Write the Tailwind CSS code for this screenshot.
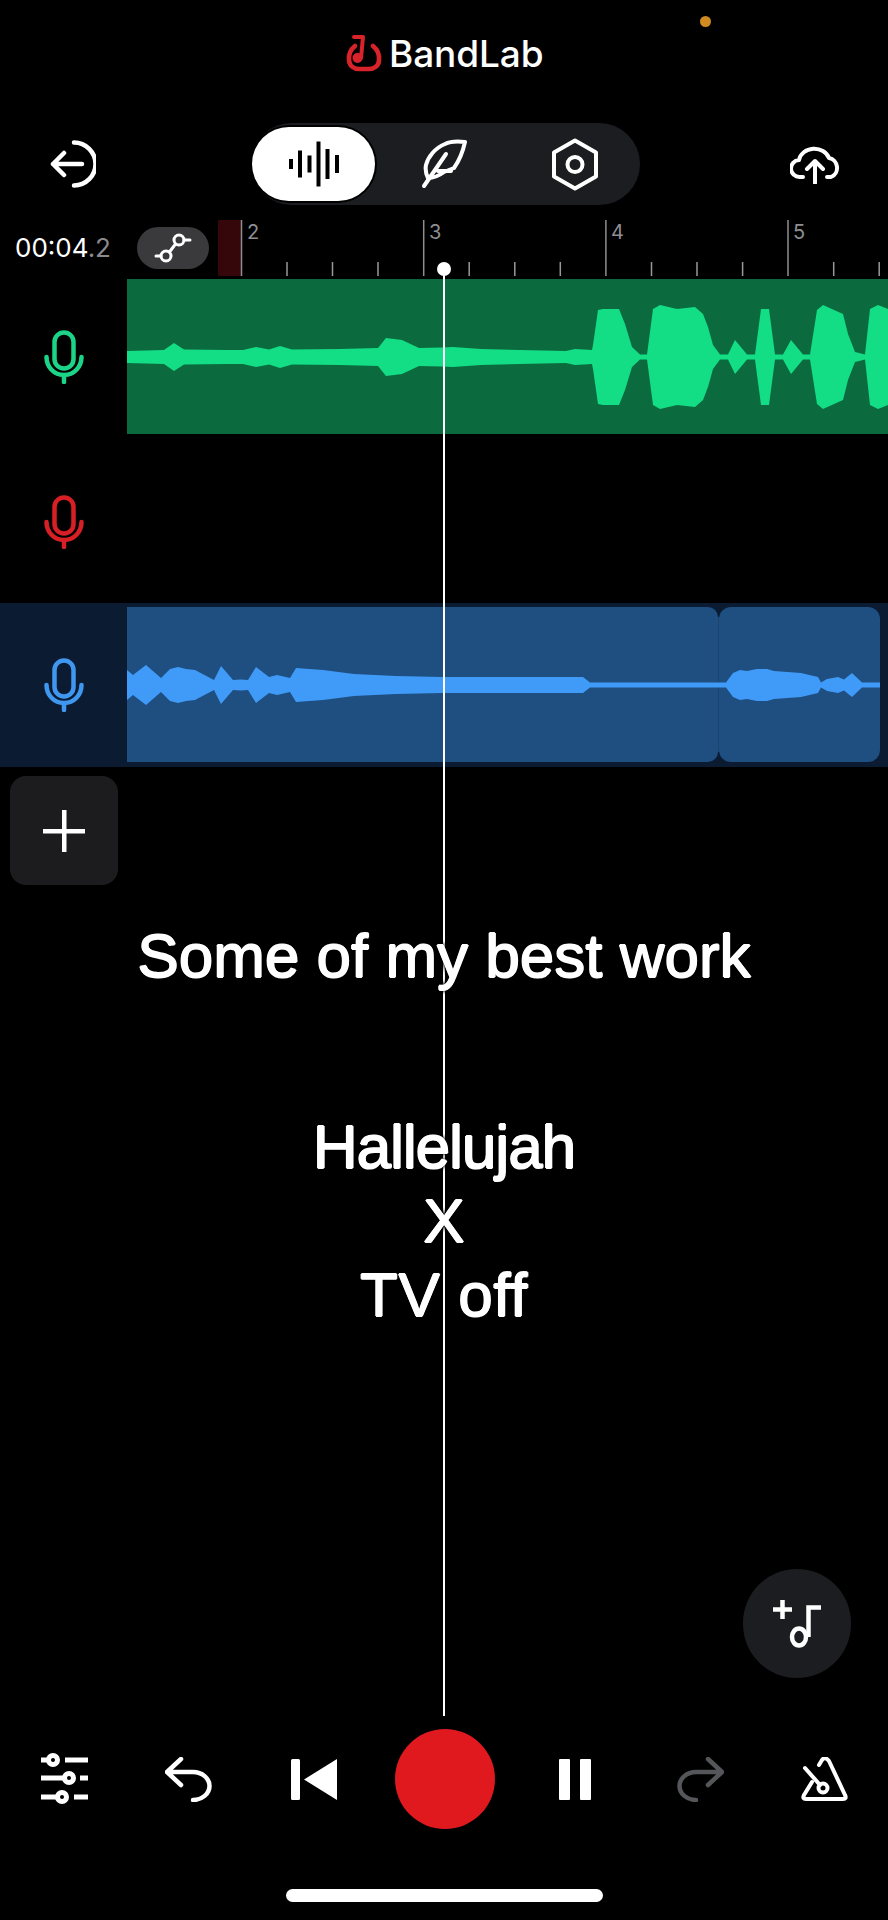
<!DOCTYPE html>
<html>
<head>
<meta charset="utf-8">
<script src="https://cdn.jsdelivr.net/npm/@tailwindcss/browser@4"></script>
</head>
<body class="bg-black">
<div class="relative w-[888px] h-[1920px] overflow-hidden bg-black text-white font-['Inter',sans-serif]">

  <!-- status dot -->
  <div class="absolute left-[700px] top-[16px] w-[11px] h-[11px] rounded-full bg-[#d08a22]"></div>

  <!-- logo -->
  <div class="pt-[36px] h-[72px]">
    <div class="ml-[346px] flex items-center gap-[7px] h-[36px]">
      <svg class="overflow-visible" width="36" height="36" viewBox="0 0 36 36" fill="none" stroke="#d8232a" stroke-linecap="round" stroke-linejoin="round">
        <path d="M9 10C4 14 2.500 19 3 24C3.500 30 8 33 13 33H23C28 33 33 30 33 24C33.500 19 32 14 27 10" stroke-width="4.600"/>
        <path d="M8 1H17L15 22" stroke-width="4"/>
        <circle cx="11.500" cy="22" r="5" fill="#d8232a" stroke="none"/>
      </svg>
      <span class="text-[37px] leading-[36px] font-medium tracking-[-0.1px] text-white">BandLab</span>
    </div>
  </div>

  <!-- toolbar -->
  <div class="mt-[51px] flex items-center h-[82px]">
    <svg class="ml-[50px] shrink-0" width="46" height="48" viewBox="0 0 46 48" fill="none" stroke="white" stroke-width="4.500" stroke-linecap="round" stroke-linejoin="round">
      <path d="M24 2.500A21.500 21.500 0 0 1 24 45.500"/>
      <path d="M32 24H3M14 13L3 24L14 35"/>
    </svg>
    <div class="ml-[155px] w-[389px] h-[82px] rounded-[41px] bg-[#1c1d21] flex items-center shrink-0 pl-[1px]">
      <div class="w-[123px] h-[74px] rounded-[37px] bg-white flex items-center justify-center shadow-[0_0_0_2px_#000]">
        <svg width="50" height="46" viewBox="0 0 50 46" fill="#000">
          <rect x="0" y="18" width="4" height="10"/>
          <rect x="9" y="9.500" width="4" height="27"/>
          <rect x="18.500" y="14.500" width="4" height="17"/>
          <rect x="27.500" y="0.500" width="4" height="45"/>
          <rect x="36.500" y="8" width="4" height="30"/>
          <rect x="46" y="14" width="4" height="18"/>
        </svg>
      </div>
      <svg class="ml-[46px]" width="46" height="50" viewBox="0 0 46 50" fill="none" stroke="white" stroke-width="4" stroke-linecap="round" stroke-linejoin="round">
        <path d="M44 3C36 2 30 2 24 5C14 9 7 18 5 26C4 31 5 35 7 39C14 39 19 36 23 33L33 29C38 22 42 12 44 3Z"/>
        <path d="M3 47L25 15M17 32H30"/>
      </svg>
      <svg class="ml-[85px]" width="46" height="53" viewBox="0 0 46 53" fill="none" stroke="white" stroke-width="4" stroke-linejoin="round">
        <path d="M23 2.500L44 14.500V38.500L23 50.500L2 38.500V14.500Z"/>
        <circle cx="23" cy="26.500" r="7.500"/>
      </svg>
    </div>
    <svg class="ml-[150px] shrink-0" width="51" height="39" viewBox="0 0 51 39" fill="none" stroke="white" stroke-width="4" stroke-linecap="round" stroke-linejoin="round">
      <path d="M13 32H10A8.500 8.500 0 0 1 9 15A15.500 13.500 0 0 1 39 13A10 10 0 0 1 41 32H37"/>
      <path d="M25 38V16M17 24L25 16L33 24"/>
    </svg>
  </div>

  <!-- time / ruler -->
  <div class="mt-[15px] flex items-center h-[56px]">
    <div class="ml-[15px] w-[122px] shrink-0 text-[26px] leading-[30px] font-normal tracking-[0px]">00:04<span class="text-[#8a8a8e]">.2</span></div>
    <div class="w-[72px] h-[42px] rounded-[21px] bg-[#3a3a3c] flex items-center justify-center shrink-0">
      <svg width="38" height="32" viewBox="0 0 38 32" fill="none" stroke="white" stroke-width="3" stroke-linecap="round">
        <circle cx="12" cy="24" r="5"/>
        <circle cx="25" cy="8" r="5"/>
        <path d="M15.500 20L21.500 12M7 24H2M30 8H36"/>
      </svg>
    </div>
    <div class="relative ml-[9px] w-[670px] h-[56px] shrink-0">
      <div class="absolute left-0 top-0 w-[23px] h-[56px] bg-[#35060a]"></div>
      <svg class="absolute inset-0" width="670" height="56" viewBox="0 0 670 56" fill="none" stroke="#8e8e92" stroke-width="1.500">
        <path d="M23.500 0V56M205.700 0V56M387.900 0V56M570 0V56"/>
        <path stroke="#98989c" d="M69 42V56M114.500 42V56M160 42V56M251.200 42V56M296.800 42V56M342.300 42V56M433.500 42V56M479 42V56M524.600 42V56M615.700 42V56M661.200 42V56"/>
      </svg>
      <div class="absolute left-[29px] top-0 text-[20px] leading-[24px] text-[#8f8f93]">2</div>
      <div class="absolute left-[211px] top-0 text-[20px] leading-[24px] text-[#8f8f93]">3</div>
      <div class="absolute left-[393px] top-0 text-[20px] leading-[24px] text-[#8f8f93]">4</div>
      <div class="absolute left-[575px] top-0 text-[20px] leading-[24px] text-[#8f8f93]">5</div>
    </div>
  </div>

  <!-- tracks -->
  <div class="mt-[3px]">
    <div class="flex h-[160px]">
      <div class="w-[127px] h-[155px] flex items-center justify-center shrink-0 pl-[1px]">
        <svg width="40" height="54" viewBox="0 0 40 54" fill="none" stroke="#1bd488" stroke-width="4.500" stroke-linecap="round">
          <rect x="10.500" y="2.500" width="19" height="36" rx="9.500"/>
          <path d="M2.500 27C2.500 37 10 45 20 45C30 45 37.500 37 37.500 27M20 45V52"/>
        </svg>
      </div>
      <div class="w-[761px] h-[155px] bg-[#0b6b3f]">
        <svg width="761" height="155" viewBox="127 -78 761 155" fill="#13de85">
          <polygon points="127,0 127,-6 164,-7 174,-14 184,-7.500 226,-7 243,-7 256,-10 269,-7.500 280,-11 292,-7.500 340,-8 378,-9 386,-19 402,-17 419,-9 442,-9.500 453,-10 481,-8 566,-6 575,-8 592,-7 593,-12 598,-47 603,-48 619,-48 625,-33 632,-10 640,-2.500 647,-2.500 648,-10 653,-48 660,-52 677,-48 695,-50 703,-43 708,-30 713,-12 720,-2.500 728,-2.500 735,-17 747,-2.500 755,-2.500 761,-48 769,-48 775,-2.500 783,-2.500 791,-17 803,-2.500 810,-2.500 817,-47 823,-52 843,-43 848,-23 855,-5 865,-2.500 870,-48 878,-52 888,-48 888,0"/>
          <g transform="scale(1,-1)">
            <polygon points="127,0 127,-6 164,-7 174,-14 184,-7.500 226,-7 243,-7 256,-10 269,-7.500 280,-11 292,-7.500 340,-8 378,-9 386,-19 402,-17 419,-9 442,-9.500 453,-10 481,-8 566,-6 575,-8 592,-7 593,-12 598,-47 603,-48 619,-48 625,-33 632,-10 640,-2.500 647,-2.500 648,-10 653,-48 660,-52 677,-48 695,-50 703,-43 708,-30 713,-12 720,-2.500 728,-2.500 735,-17 747,-2.500 755,-2.500 761,-48 769,-48 775,-2.500 783,-2.500 791,-17 803,-2.500 810,-2.500 817,-47 823,-52 843,-43 848,-23 855,-5 865,-2.500 870,-48 878,-52 888,-48 888,0"/>
          </g>
        </svg>
      </div>
    </div>
    <div class="flex h-[164px]">
      <div class="w-[127px] h-[155px] flex items-center justify-center shrink-0 pl-[1px] pt-[11px]">
        <svg width="40" height="54" viewBox="0 0 40 54" fill="none" stroke="#d91f26" stroke-width="4.500" stroke-linecap="round">
          <rect x="10.500" y="2.500" width="19" height="36" rx="9.500"/>
          <path d="M2.500 27C2.500 37 10 45 20 45C30 45 37.500 37 37.500 27M20 45V52"/>
        </svg>
      </div>
    </div>
    <div class="relative flex h-[164px] pt-[4px] bg-[#0b1c32]">
      <div class="w-[127px] h-[155px] flex items-center justify-center shrink-0 pl-[1px]">
        <svg width="40" height="54" viewBox="0 0 40 54" fill="none" stroke="#3f97f0" stroke-width="4.500" stroke-linecap="round">
          <rect x="10.500" y="2.500" width="19" height="36" rx="9.500"/>
          <path d="M2.500 27C2.500 37 10 45 20 45C30 45 37.500 37 37.500 27M20 45V52"/>
        </svg>
      </div>
      <div class="w-[591px] h-[155px] bg-[#1f4e80] rounded-r-[10px]"></div>
      <div class="w-[1px] h-[135px] mt-[10px] bg-[#1a4470]"></div>
      <div class="w-[161px] h-[155px] bg-[#1f4e80] rounded-[12px]"></div>
      <svg class="absolute left-[127px] top-[4px]" width="753" height="155" viewBox="127 -78 753 155" fill="#3f9bf7">
        <polygon points="127,0 127,-15 133,-10 146,-20 161,-7 170,-16 178,-18 186,-16 195,-15 214,-5 221,-19 233,-5 241,-5.500 248,-5 256,-18 269,-8 277,-10 290,-7 296,-17 323,-15 354,-11 396,-9 442,-8 583,-8 590,-2.500 726,-2.500 733,-12 740,-15 747,-14 757,-16 767,-16 774,-14 801,-12 818,-8 821,-2.500 827,-6 838,-8 844,-5.500 852,-12 862,-2.500 880,-2.500 880,0"/>
        <g transform="scale(1,-1)">
          <polygon points="127,0 127,-15 133,-10 146,-20 161,-7 170,-16 178,-18 186,-16 195,-15 214,-5 221,-19 233,-5 241,-5.500 248,-5 256,-18 269,-8 277,-10 290,-7 296,-17 323,-15 354,-11 396,-9 442,-8 583,-8 590,-2.500 726,-2.500 733,-12 740,-15 747,-14 757,-16 767,-16 774,-14 801,-12 818,-8 821,-2.500 827,-6 838,-8 844,-5.500 852,-12 862,-2.500 880,-2.500 880,0"/>
        </g>
      </svg>
    </div>
  </div>

  <!-- add track -->
  <div class="mt-[9px] ml-[10px] w-[108px] h-[109px] rounded-[16px] bg-[#1c1c1e] flex items-center justify-center">
    <svg width="44" height="44" viewBox="0 0 44 44" fill="white">
      <rect x="20" y="1" width="4.500" height="42"/>
      <rect x="1" y="20" width="42" height="4.500"/>
    </svg>
  </div>

  <!-- playhead -->
  <div class="absolute left-[443px] top-[268px] w-[2px] h-[1448px] bg-white"></div>
  <div class="absolute left-[437px] top-[262px] w-[14px] h-[14px] rounded-full bg-white"></div>

  <!-- caption -->
  <div class="relative mt-[34px] text-center text-[62px] leading-[74px] text-white font-['Liberation_Sans',sans-serif] [text-shadow:0.8px_0_0_#fff,-0.8px_0_0_#fff,0_0.6px_0_#fff,0_-0.6px_0_#fff,0_0_4px_#000,0_0_4px_#000,0_0_4px_#000]">
    <p>Some of my best work</p>
    <p class="mt-[117px] tracking-[-1px]">Hallelujah</p>
    <p>X</p>
    <p class="tracking-[0.6px]">TV off</p>
  </div>

  <!-- add note -->
  <div class="absolute left-[743px] top-[1569px] w-[108px] h-[109px] rounded-full bg-[#1c1d21]">
    <svg width="108" height="109" viewBox="0 0 108 109" fill="none" stroke="white" stroke-width="4.500">
      <path d="M39.500 31V50M30 40.500H49"/>
      <path d="M65.500 68V38.500H78"/>
      <ellipse cx="56" cy="68" rx="7" ry="8.500"/>
    </svg>
  </div>

  <!-- transport -->
  <div class="mt-[397px] flex items-center h-[100px]">
    <svg class="ml-[41px] shrink-0" width="47" height="54" viewBox="0 0 47 54" fill="none" stroke="white" stroke-width="5">
      <path d="M0 8H6M24 8H47M0 26H22M39 26H47M0 45H15M33 45H47"/>
      <circle cx="12" cy="8" r="4.500"/>
      <circle cx="28" cy="26" r="4.500"/>
      <circle cx="21" cy="45" r="4.500"/>
    </svg>
    <svg class="ml-[77px] shrink-0" width="47" height="45" viewBox="0 0 47 45" fill="none" stroke="white" stroke-width="4.500" stroke-linecap="round" stroke-linejoin="round">
      <path d="M16 2L2 15L16 28M2 15H28A16.500 14 0 0 1 28 43"/>
    </svg>
    <svg class="ml-[79px] shrink-0" width="46" height="41" viewBox="0 0 46 41" fill="white">
      <rect x="0" y="0" width="9" height="41" rx="1.500"/>
      <path d="M46 0V41L13 20.500Z"/>
    </svg>
    <div class="ml-[58px] w-[100px] h-[100px] rounded-full bg-[#e0191f] shrink-0"></div>
    <div class="ml-[64px] flex gap-[10px] shrink-0">
      <div class="w-[11px] h-[41px] rounded-[1px] bg-white"></div>
      <div class="w-[11px] h-[41px] rounded-[1px] bg-white"></div>
    </div>
    <svg class="ml-[86px] shrink-0" width="47" height="45" viewBox="0 0 47 45" fill="none" stroke="#55565a" stroke-width="4.500" stroke-linecap="round" stroke-linejoin="round">
      <path d="M31 2L45 15L31 28M45 15H19A16.500 14 0 0 0 19 43"/>
    </svg>
    <svg class="ml-[77px] shrink-0" width="47" height="45" viewBox="0 0 47 45" fill="none" stroke="white" stroke-width="4" stroke-linecap="round" stroke-linejoin="round">
      <path d="M11 25L3 38Q1 42 5 42H42Q46 42 44 38L28 4Q24 -1 21 3L18 8"/>
      <path d="M4 11L19 28"/>
      <circle cx="22" cy="31" r="4.500"/>
    </svg>
  </div>

  <!-- home indicator -->
  <div class="mt-[60px] ml-[286px] w-[317px] h-[13px] rounded-full bg-white"></div>
</div>
</body>
</html>
